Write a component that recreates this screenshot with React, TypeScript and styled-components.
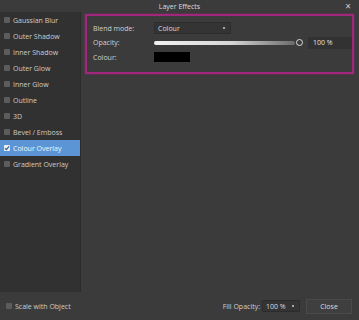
import React from 'react';
import styled, { createGlobalStyle } from 'styled-components';

const Global = createGlobalStyle`
html, body {
  margin: 0;
  padding: 0;
  background: #3b3b3b;
}
body {
  font-family: 'Open Sans', 'Noto Sans', sans-serif;
  color: #d2d2d2;
}
`

const Window = styled.div`
width: 359px;
height: 320px;
display: flex;
flex-direction: column;
background: #3b3b3b;
overflow: hidden;
`

const TitleBar = styled.div`
height: 12px;
position: relative;
display: flex;
align-items: center;
justify-content: center;
font-size: 7px;
color: #dcdcdc;
`

const CloseX = styled.span`
position: absolute;
right: 8px;
top: 1px;
font-size: 10px;
line-height: 10px;
color: #cfcfcf;
`

const Body = styled.div`
flex: 1;
display: flex;
flex-direction: row;
`

const Sidebar = styled.div`
width: 83px;
background: #313131;
display: flex;
flex-direction: column;
border-right: 1px solid #2b2b2b;
`

const Item = styled.div<{ $selected?: boolean }>`
height: 16px;
display: flex;
align-items: center;
gap: 3px;
padding-left: 4px;
font-size: 7px;
color: ${p => (p.$selected ? '#f2f6fb' : '#cdcdcd')};
background: ${p => (p.$selected ? '#5b95d6' : 'transparent')};
`

const Box = styled.span<{ $checked?: boolean }>`
width: 6px;
height: 6px;
border-radius: 1px;
background: ${p => (p.$checked ? '#f0f0f0' : '#5c5c5c')};
display: inline-flex;
align-items: center;
justify-content: center;
flex-shrink: 0;
`

const Content = styled.div`
flex: 1;
padding: 2px 5px 0 4px;
`

const Highlight = styled.div`
height: 51px;
border: 2px solid #a1277c;
box-shadow: 0 0 2px rgba(170, 40, 130, 0.6);
padding: 5px 0 0 6px;
display: flex;
flex-direction: column;
`

const Row = styled.div`
height: 14.5px;
display: flex;
align-items: center;
`

const Label = styled.span`
width: 61px;
font-size: 7px;
color: #d0d0d0;
`

const Dropdown = styled.div<{ $w: number }>`
width: ${p => p.$w}px;
height: 12px;
background: #343434;
border: 1px solid #2c2c2c;
border-radius: 1px;
display: flex;
align-items: center;
justify-content: space-between;
padding: 0 5px 0 3px;
box-sizing: border-box;
font-size: 7px;
color: #dcdcdc;
`

const Arrow = styled.span`
width: 2px;
height: 2px;
background: #cfcfcf;
border-radius: 1px;
`

const Track = styled.div`
width: 141px;
height: 4px;
border-radius: 2px;
background: linear-gradient(to right, #f2f2f2 0%, #d6d6d6 55%, #6a6a6a 100%);
`

const Knob = styled.span`
width: 5px;
height: 5px;
border: 1.2px solid #dedede;
border-radius: 50%;
margin-left: 1px;
`

const ValueField = styled.div`
width: 44px;
height: 12px;
margin-left: 5px;
background: #323232;
display: flex;
align-items: center;
padding-left: 5px;
box-sizing: border-box;
font-size: 7px;
color: #e0e0e0;
`

const Swatch = styled.div`
width: 36px;
height: 10px;
background: #000;
`

const Footer = styled.div`
height: 28px;
display: flex;
align-items: center;
padding: 0 7px 0 6px;
`

const FootCheck = styled.div`
display: flex;
align-items: center;
gap: 3px;
font-size: 7px;
color: #cdcdcd;
`

const Spacer = styled.div`
flex: 1;
`

const FootLabel = styled.span`
font-size: 7px;
color: #d0d0d0;
margin-right: 2px;
`

const Button = styled.div`
width: 46px;
height: 15px;
margin-left: 6px;
background: #3f3f3f;
border: 1px solid #4a4a4a;
box-sizing: border-box;
display: flex;
align-items: center;
justify-content: center;
font-size: 7px;
color: #dedede;
`

const Tick = () => (
  <svg width="6" height="6" viewBox="0 0 6 6">
    <path d="M1 3.2 L2.5 4.6 L5 1.3" stroke="#2b5fa0" strokeWidth="1.2" fill="none" />
  </svg>
)

const effects = [
  'Gaussian Blur',
  'Outer Shadow',
  'Inner Shadow',
  'Outer Glow',
  'Inner Glow',
  'Outline',
  '3D',
  'Bevel / Emboss',
  'Colour Overlay',
  'Gradient Overlay',
];

const App = () => {
  return (
    <Window>
      <Global />
      <TitleBar>
        Layer Effects
        <CloseX>×</CloseX>
      </TitleBar>
      <Body>
        <Sidebar>
          {effects.map(name => {
            const on = name === 'Colour Overlay';
            return (
              <Item key={name} $selected={on}>
                <Box $checked={on}>{on ? <Tick /> : null}</Box>
                {name}
              </Item>
            );
          })}
        </Sidebar>
        <Content>
          <Highlight>
            <Row>
              <Label>Blend mode:</Label>
              <Dropdown $w={77}>Colour<Arrow /></Dropdown>
            </Row>
            <Row>
              <Label>Opacity:</Label>
              <Track />
              <Knob />
              <ValueField>100 %</ValueField>
            </Row>
            <Row>
              <Label>Colour:</Label>
              <Swatch />
            </Row>
          </Highlight>
        </Content>
      </Body>
      <Footer>
        <FootCheck><Box />Scale with Object</FootCheck>
        <Spacer />
        <FootLabel>Fill Opacity:</FootLabel>
        <Dropdown $w={38}>100 %<Arrow /></Dropdown>
        <Button>Close</Button>
      </Footer>
    </Window>
  );
}

export default App;
